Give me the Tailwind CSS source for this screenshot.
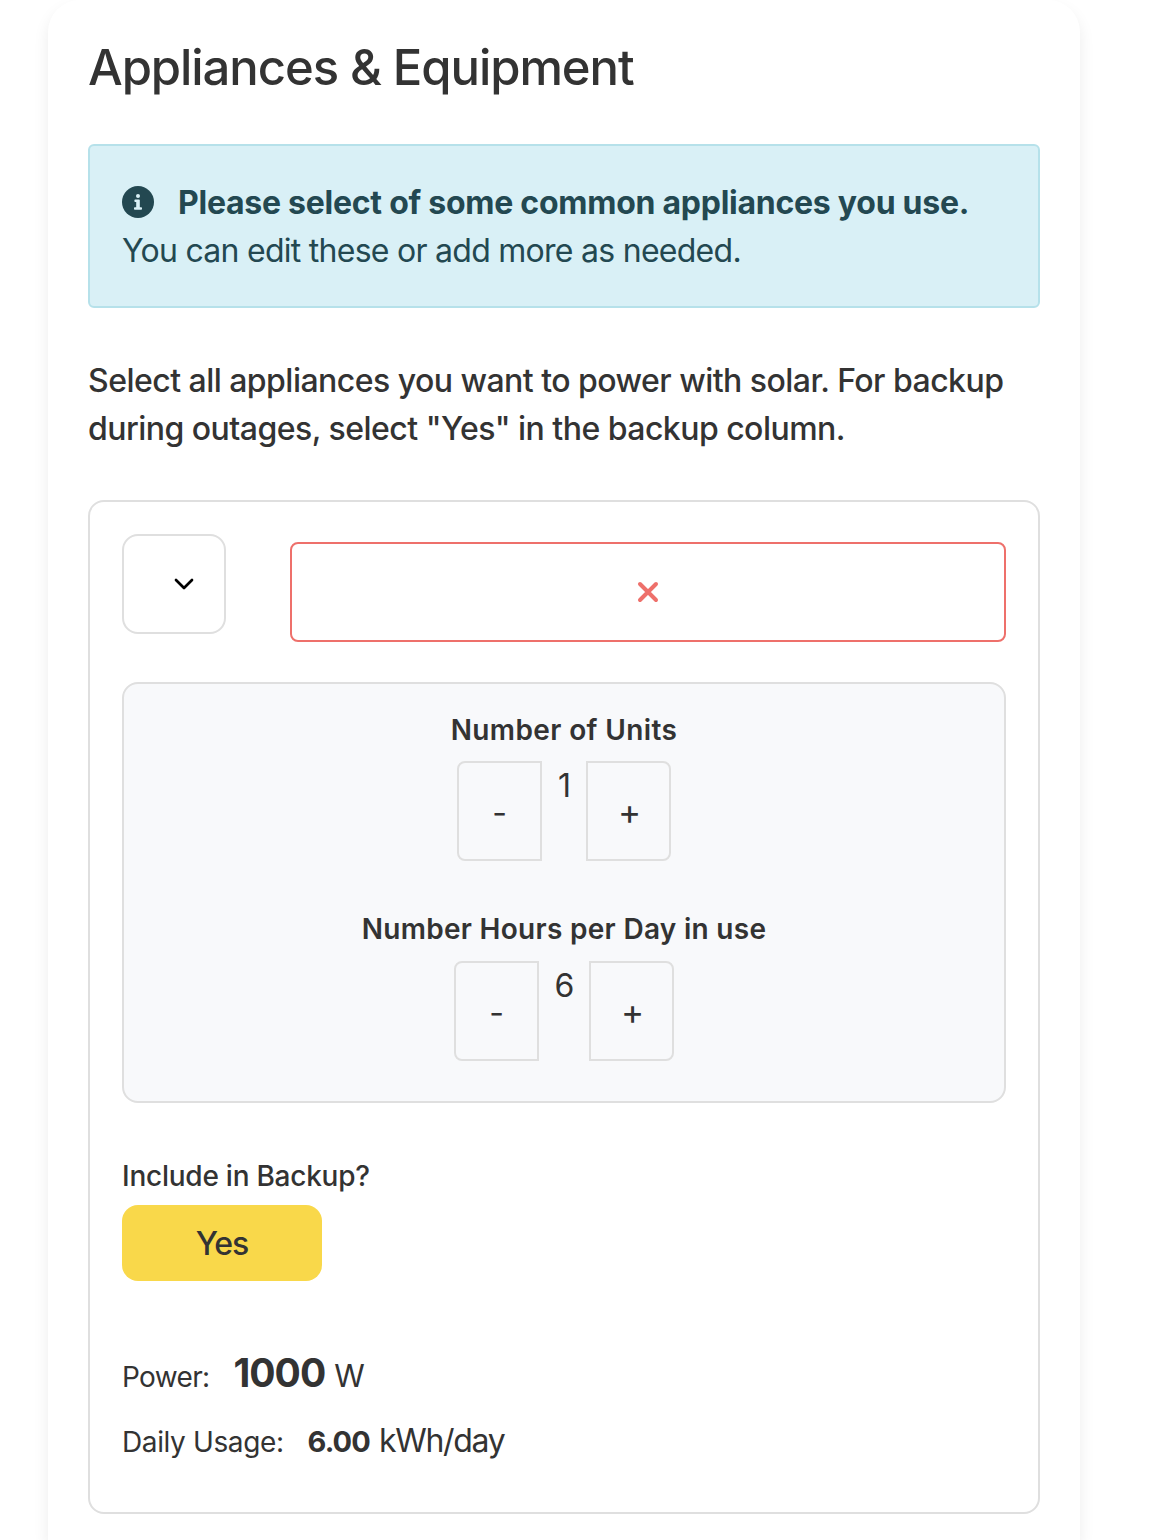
<!DOCTYPE html>
<html lang="en"><head><meta charset="utf-8"><title>Appliances &amp; Equipment</title>
<script src="https://cdn.jsdelivr.net/npm/@tailwindcss/browser@4"></script></head>
<body class="bg-white font-['Inter',sans-serif] text-[#333333] h-[1540px] overflow-hidden">
<main class="ml-12 w-[1032px] h-[1540px] rounded-t-[32px] bg-white px-10 pt-[38px] shadow-[0_8px_16px_rgba(0,0,0,0.08)]">
  <h1 class="h-[60px] whitespace-nowrap text-[49px] leading-[60px] font-medium tracking-[-1.08px]"><span>Appliances &amp; Equipment</span></h1>
  <section class="mt-[46px] h-[164px] rounded-[6px] border-2 border-[#b6e1ea] bg-[#d9f0f6] px-8 pt-8 text-[32px] leading-[48px] text-[#234851]">
    <div class="flex h-12 items-center whitespace-nowrap font-bold tracking-[-0.26px]"><svg class="mr-[24px] size-8 shrink-0" viewBox="0 0 32 32"><circle cx="16" cy="16" r="16" fill="currentColor"/><circle cx="16" cy="10" r="2" fill="#d9f0f6"/><path d="M13.200 13.500H17a.8.8 0 0 1 .8.8v6.900h1.400a.8.8 0 0 1 .8.8v1a.8.8 0 0 1-.8.8h-6.400a.8.8 0 0 1-.8-.8v-1a.8.8 0 0 1 .8-.8h1.400v-5.100h-1a.8.8 0 0 1-.8-.8v-1a.8.8 0 0 1 .8-.8z" fill="#d9f0f6"/></svg><span class="pt-0.5">Please select of some common appliances you use.</span></div>
    <p class="pt-px whitespace-nowrap tracking-[-0.73px]"><span>You can edit these or add more as needed.</span></p>
  </section>
  <p class="mt-[49px] h-24 whitespace-nowrap text-[32px] leading-[48px] font-medium tracking-[-0.53px]"><span>Select all appliances you want to power with solar. For backup</span><br><span>during outages, select "Yes" in the backup column.</span></p>
  <section class="mt-[47px] h-[1014px] rounded-2xl border-2 border-[#dfdfdf] px-8 pt-8">
    <div class="flex h-[148px] items-start justify-between">
      <button class="flex h-[100px] w-[104px] items-center rounded-2xl border-2 border-[#dfdfdf] pl-[50px]"><svg class="h-5 w-5" viewBox="0 0 20 20" fill="none" stroke="#000" stroke-width="2.700" stroke-linecap="round" stroke-linejoin="round"><path d="m2 6 8 8 8-8"/></svg></button>
      <button class="mt-2 flex h-[100px] w-[716px] items-center justify-center rounded-lg border-2 border-[#ee706b] text-[#ee706b]"><svg class="size-6" viewBox="0 0 24 24" fill="none" stroke="currentColor" stroke-width="4" stroke-linecap="round"><path d="m4 4 16 16M20 4 4 20"/></svg></button>
    </div>
    <div class="flex h-[421px] flex-col items-center rounded-2xl border-2 border-[#dfdfdf] bg-[#f8f9fb] pt-[24px]">
      <h2 class="h-[53px] text-[28px] leading-[44px] font-semibold tracking-[0.38px]"><span>Number of Units</span></h2>
      <div class="flex h-[100px] w-[214px] justify-between text-[32px]"><button class="w-[85px] rounded-l-lg border-2 border-[#dfdfdf] pt-1">-</button><span class="pl-px leading-[50px]">1</span><button class="w-[85px] rounded-r-lg border-2 border-[#dfdfdf] pl-0.5 text-[35px]">+</button></div>
      <h2 class="mt-[46px] h-[54px] text-[28px] leading-[44px] font-semibold tracking-[0.3px]"><span>Number Hours per Day in use</span></h2>
      <div class="flex h-[100px] w-[220px] justify-between text-[32px]"><button class="w-[85px] rounded-l-lg border-2 border-[#dfdfdf] pt-1">-</button><span class="pl-px leading-[50px]">6</span><button class="w-[85px] rounded-r-lg border-2 border-[#dfdfdf] pl-0.5 text-[35px]">+</button></div>
    </div>
    <div class="mt-[52px] text-[28px] leading-[42px] font-medium tracking-[-0.24px]"><span>Include in Backup?</span></div>
    <button class="mt-[8px] block h-[76px] w-[200px] rounded-2xl bg-[#f9d84a] pt-0.5 text-[32px] font-medium tracking-[-1px]">Yes</button>
    <div class="mt-[62px] flex items-baseline whitespace-nowrap text-[28px] leading-[60px]"><span class="tracking-[-0.65px]">Power:</span><strong class="ml-[24px] text-[39px] font-bold tracking-[-1px]">1000</strong><span class="ml-[9px] text-[31px] tracking-[-0.6px]">W</span></div>
    <div class="mt-[10px] flex items-baseline whitespace-nowrap text-[28px] leading-[48px]"><span class="tracking-[-0.38px]">Daily Usage:</span><strong class="ml-[24px] text-[29px] font-bold tracking-[-0.9px]">6.00</strong><span class="ml-[9px] text-[32px] tracking-[-1.3px]">kWh/day</span></div>
  </section>
</main></body></html>
